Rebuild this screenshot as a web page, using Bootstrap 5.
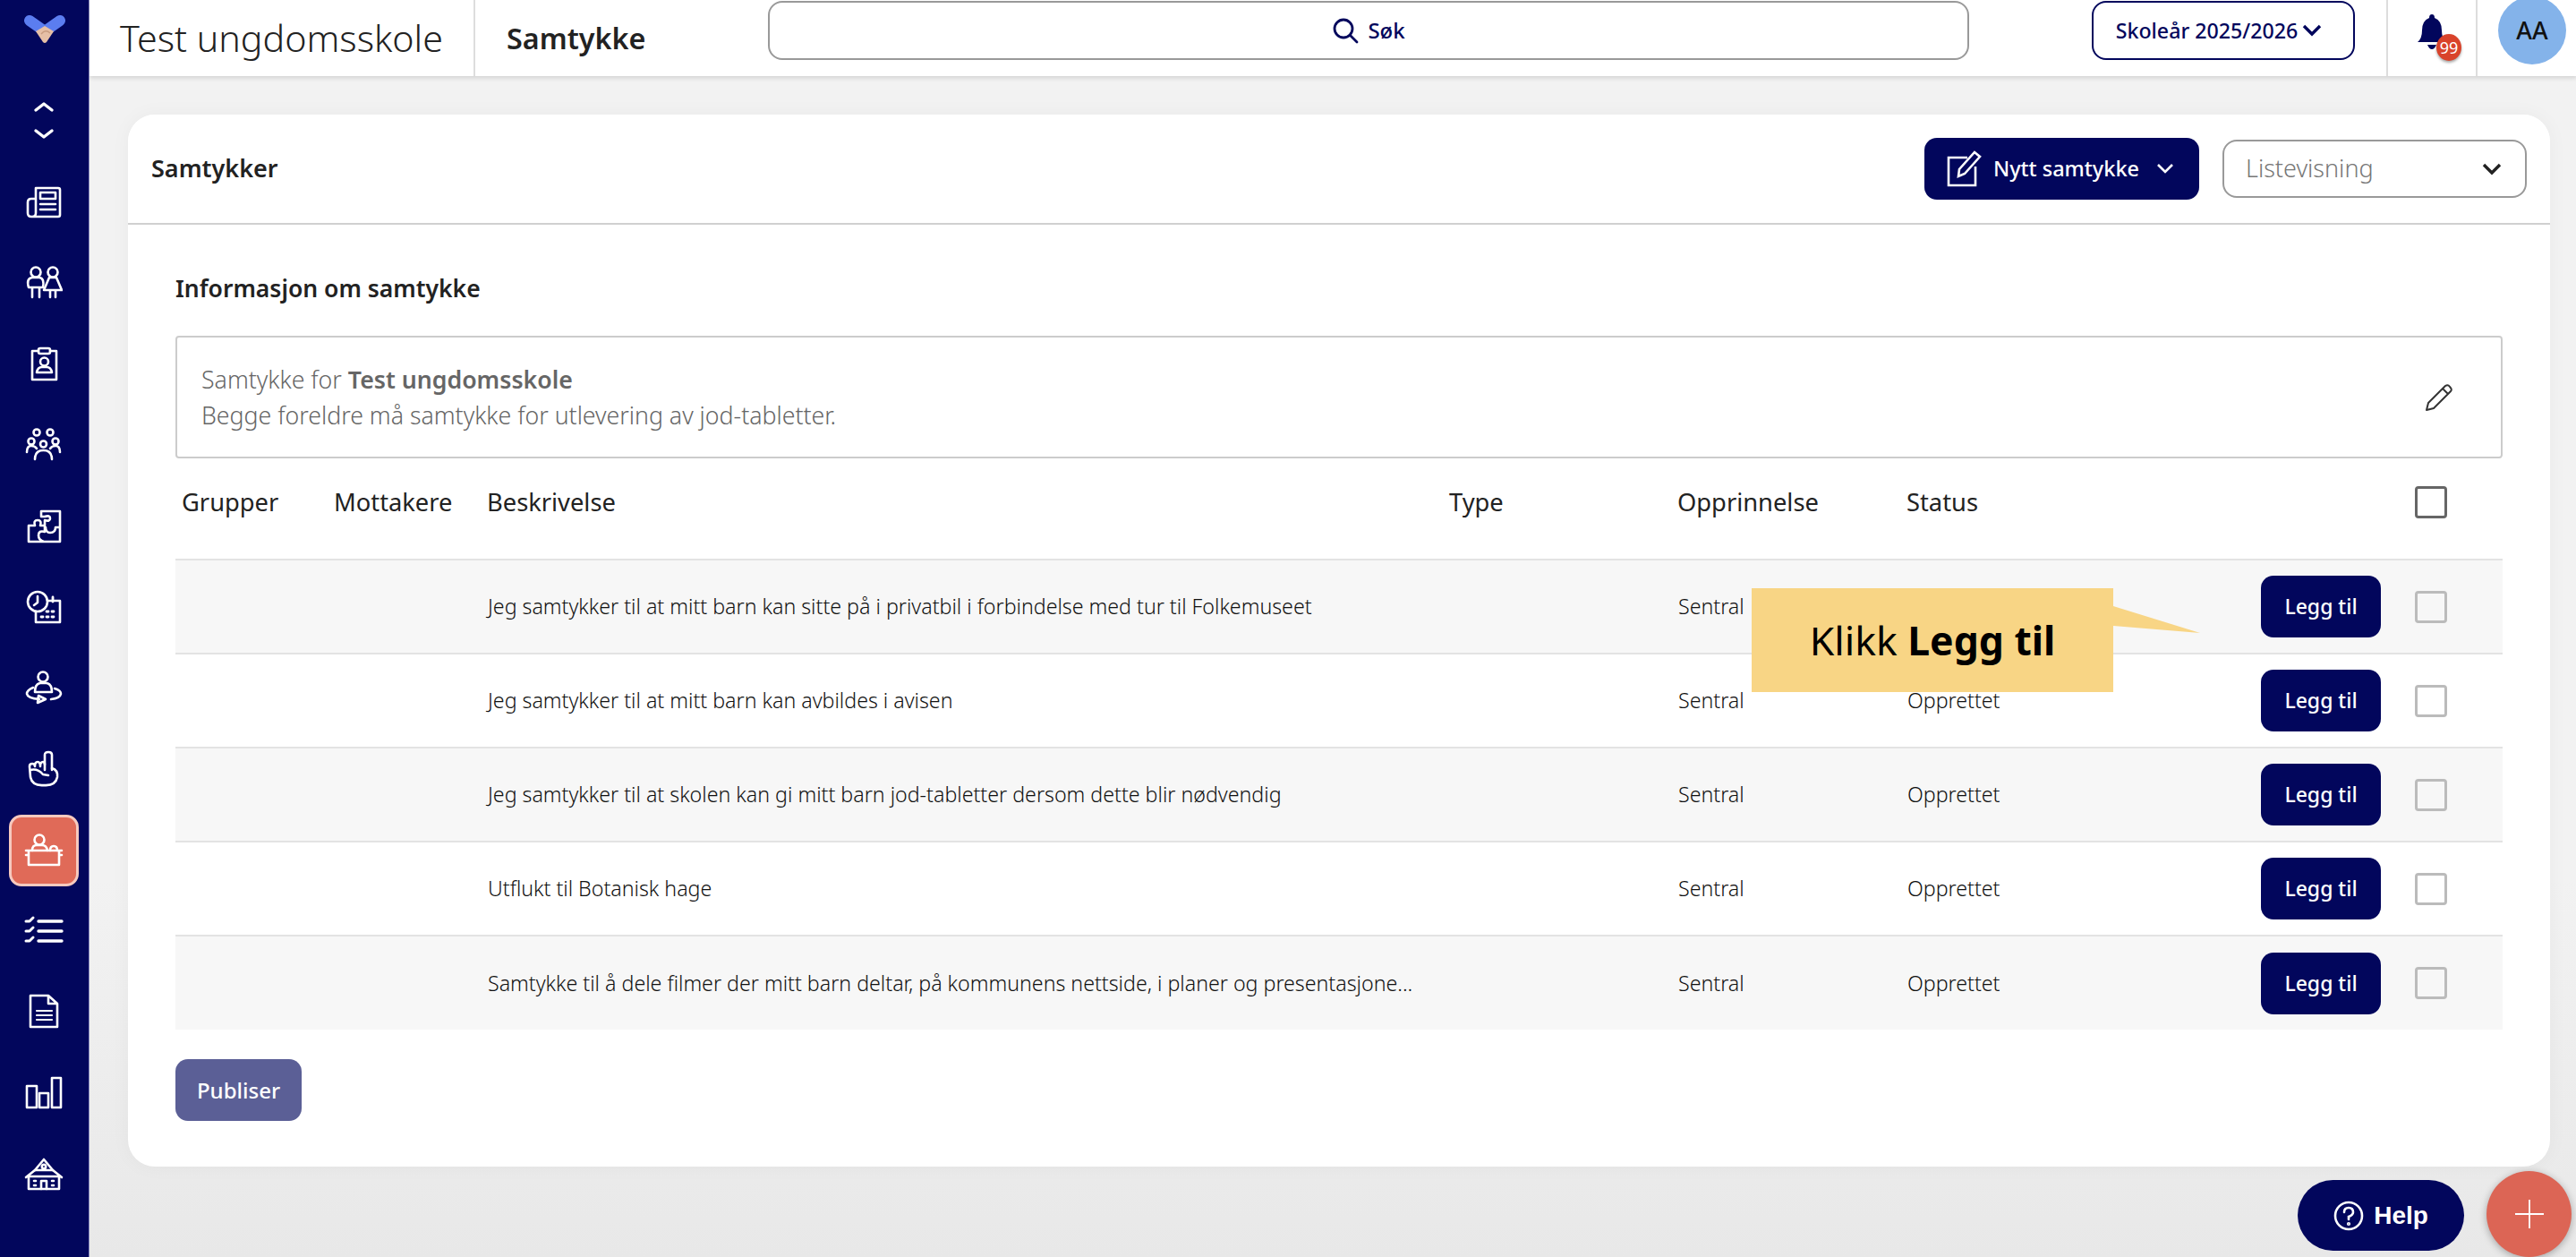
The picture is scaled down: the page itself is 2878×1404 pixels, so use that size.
<!DOCTYPE html>
<html lang="nb">
<head>
  <meta charset="UTF-8">
  <title>Samtykke</title>
  <link href="https://cdn.jsdelivr.net/npm/bootstrap@5.3.0/dist/css/bootstrap.min.css" rel="stylesheet">
  <style>
    html, body { height: 100%; }
    body {
      font-family: "Noto Sans", "Open Sans", sans-serif;
      background: linear-gradient(#f2f2f2 70%, #e8e8e8);
      color: #222;
      overflow: hidden;
    }
    .app-shell { height: 1404px; }
    .side-rail {
      width: 100px; flex: none; background: #02065c;
      border-right: 1px solid #8a8cc0;
      padding-top: 15px;
    }
    .rail-logo { height: 75px; }
    .rail-item { width: 78px; height: 90.5px; margin-left: 10px; }
    .side-rail svg.line-icon { fill: none; stroke: #fff; stroke-width: 2.6; stroke-linecap: round; stroke-linejoin: round; }
    .rail-active {
      width: 78px; height: 80px; margin: 5px 0 5px 10px; background: #e06a58;
      border: 3px solid #f6c9bf; border-radius: 14px;
    }
    .top-bar { height: 85px; background: #fff; box-shadow: 0 2px 5px rgba(0,0,0,.14); }
    .school-cell { width: 431px; padding-left: 34px; border-right: 2px solid #ddd; font-size: 41.2px; font-weight: 300; }
    .page-cell { width: 327px; padding-left: 35px; font-size: 32.3px; font-weight: 600; }
    .search-box {
      width: 1342px; height: 66px; margin-top: 1px; background: #fff;
      border: 2px solid #999; border-radius: 16px; color: #02065c;
      font-size: 24px; font-weight: 500; gap: 10px;
    }
    .year-btn {
      width: 294px; height: 66px; margin: 1px 0 0 137px;
      border: 2px solid #02065c; border-radius: 16px; background: #fff;
      color: #02065c; font-size: 23.2px; font-weight: 500; gap: 5px; padding: 0 10px 0 0;
    }
    .bell-cell { width: 102px; margin-left: 35px; border-left: 2px solid #ddd; border-right: 2px solid #ddd; }
    .bell-count {
      top: 38px; left: 54px; width: 28px; height: 30px; background: #d9432b; color: #fff;
      border-radius: 50%; font-size: 18px; line-height: 30px; text-align: center;
      box-shadow: 0 2px 3px rgba(0,0,0,.35);
    }
    .avatar-dot {
      width: 76px; height: 76px; margin: -4px 0 0 23px; border-radius: 50%;
      background: #84b3ea; color: #111; font-size: 27px; font-weight: 500;
    }
    .main-card {
      margin: 43px 30px 0 43px; height: 1175px; border: 0; border-radius: 30px;
      box-shadow: 0 0 22px rgba(0,0,0,.04);
    }
    .main-head {
      height: 123px; padding: 0 26px; background: #fff;
      border-bottom: 2px solid #d0d0d0;
    }
    .main-head:first-child { border-radius: 30px 30px 0 0; }
    .head-title { font-size: 27px; font-weight: 600; }
    .new-btn {
      width: 307px; height: 69px; background: #02065c; color: #fff; border-radius: 14px;
      font-size: 23.500px; font-weight: 500; gap: 11px; padding: 0 4px 0 0; border: 0;
    }
    .new-btn:hover { background: #02065c; color: #fff; }
    .view-select {
      width: 340px; height: 65px; margin-left: 26px; padding: 0 26px 0 24px;
      border: 2px solid #999; border-radius: 16px; color: #777; font-size: 27px; font-weight: 300;
    }
    .main-body { padding: 53px 53px 0; position: relative; }
    .info-title { font-size: 26.500px; font-weight: 600; line-height: 36px; margin-bottom: 35px; }
    .info-box {
      height: 137px; border: 2px solid #ccc; border-radius: 4px; padding: 0 52px 0 27px;
      color: #666; font-size: 26.700px; font-weight: 300; line-height: 40px;
    }
    .info-box b { font-weight: 600; }
    .consent-table { table-layout: fixed; width: 2600px; margin: 0; --bs-table-bg: transparent; }
    .consent-table th {
      height: 113px; padding: 0 0 14px 7px; border-bottom: 2px solid #e3e3e3;
      font-size: 27.300px; font-weight: 400; vertical-align: middle; color: #222;
    }
    .consent-table td {
      height: 105px; padding: 0 0 0 8px; border-bottom: 2px solid #e3e3e3;
      font-size: 23.200px; font-weight: 300; vertical-align: middle; color: #111; white-space: nowrap;
    }
    .consent-table tr:last-child td { border-bottom: 0; }
    .consent-table tbody tr:nth-child(odd) td { background: #f7f7f7; }
    .consent-table td.add-cell { padding-right: 20px; }
    .add-btn {
      width: 134px; height: 69px; background: #02065c; color: #fff; border: 0;
      border-radius: 14px; font-size: 23px; font-weight: 500; padding: 0;
    }
    .add-btn:hover { background: #02065c; color: #fff; }
    .tick-box { width: 36px; height: 36px; border: 3px solid #bbb; border-radius: 4px; background: #fff0; display: block; margin-left: 18px; }
    .tick-head { border-color: #666; }
    .publish-btn {
      width: 141px; height: 69px; margin-top: 33px; background: #5b5f96; color: #fff;
      border: 0; border-radius: 14px; font-size: 24px; font-weight: 500; padding: 0;
    }
    .hint-box {
      left: 1814px; top: 406px; width: 404px; height: 116px; background: #f8d585;
      color: #000; font-size: 44.500px; font-weight: 400;
    }
    .hint-box b { font-weight: 700; }
    .hint-tail { left: 404px; top: 20px; }
    .help-fab {
      position: fixed; left: 2567px; top: 1318px; width: 186px; height: 79px;
      background: #02065c; color: #fff; border-radius: 40px; border: 0; padding: 0; gap: 11px;
      font-family: "Liberation Sans", sans-serif; font-size: 28px; font-weight: 700;
    }
    .plus-fab {
      position: fixed; left: 2778px; top: 1308px; width: 95px; height: 96px; border-radius: 50%;
      background: #dc6555; box-shadow: 0 2px 8px rgba(0,0,0,.3);
    }
  </style>
</head>
<body>
  <div class="app-shell d-flex">
    <nav class="side-rail d-flex flex-column">
      <div class="rail-logo d-flex justify-content-center">
        <svg width="48" height="36" viewBox="0 0 48 36">
          <path d="M7 8 L24 20 L41 8" fill="none" stroke="#5b7df0" stroke-width="12" stroke-linecap="round" stroke-linejoin="round"/>
          <path d="M14 20 L24 14 L34 20 L26 32 Q24 34 22 32Z" fill="#e6bfa6"/>
          <path d="M20 23 Q25 17 30 22" fill="none" stroke="#c99c80" stroke-width="1.5"/>
        </svg>
      </div>
      <div class="rail-item d-flex align-items-center justify-content-center">
        <svg class="line-icon" width="40" height="50" viewBox="0 0 40 50"><path d="M11 13 L20 6 L29 13M11 36 L20 43 L29 36" stroke-width="3.4"/></svg>
      </div>
      <div class="rail-item d-flex align-items-center justify-content-center">
        <svg class="line-icon" width="42" height="40" viewBox="0 0 42 40"><path d="M12 4 H37 Q39 4 39 6 V34 Q39 36 37 36 H7 Q3 36 3 32 V20 Q3 16 7 16 H12 M12 4 V32 Q12 36 8 36"/><rect x="17" y="9" width="17" height="7"/><path d="M17 22 H34 M17 28 H34"/></svg>
      </div>
      <div class="rail-item d-flex align-items-center justify-content-center">
        <svg class="line-icon" width="42" height="40" viewBox="0 0 42 40"><circle cx="12" cy="8" r="5.5"/><path d="M4 25 Q1 15 8 14 H16 Q22 15 20 25 H4Z M8 25 V36 M16 25 V36"/><circle cx="31" cy="8" r="5.5"/><path d="M27 14 H35 L41 28 H21Z M28 28 V36 M34 28 V36"/></svg>
      </div>
      <div class="rail-item d-flex align-items-center justify-content-center">
        <svg class="line-icon" width="42" height="40" viewBox="0 0 42 40"><path d="M15 5 H8 V37 H35 V5 H28"/><rect x="15" y="2" width="13" height="6" rx="2"/><circle cx="21.5" cy="17" r="4.5"/><path d="M13 29 Q14 23 19 23 H24 Q29 23 30 29Z"/></svg>
      </div>
      <div class="rail-item d-flex align-items-center justify-content-center">
        <svg class="line-icon" width="42" height="40" viewBox="0 0 42 40"><circle cx="13" cy="6" r="3.5"/><circle cx="28" cy="6" r="3.5"/><circle cx="7" cy="16" r="3.5"/><circle cx="20.500" cy="19" r="3.5"/><circle cx="34" cy="16" r="3.5"/><path d="M2 28 Q2 21 7 21 Q11 21 13 24M39 28 Q39 21 34 21 Q30 21 28 24M11 36 Q11 26 20.500 26 Q30 26 30 36"/></svg>
      </div>
      <div class="rail-item d-flex align-items-center justify-content-center">
        <svg class="line-icon" width="42" height="40" viewBox="0 0 42 40"><path d="M18 3 H39 V37 H4 V19 H11 Q9 13 14 13 Q19 13 17 19 H22 V13 Q28 15 28 11 Q28 7 22 9 L18 9Z M39 21 H34 Q34 27 28 27 Q23 27 23 21 M22 19 V26 Q15 24 15 30 Q15 35 21 37"/></svg>
      </div>
      <div class="rail-item d-flex align-items-center justify-content-center">
        <svg class="line-icon" width="42" height="40" viewBox="0 0 42 40"><circle cx="14" cy="14" r="11"/><path d="M14 8 V15 L10 18"/><path d="M25 13 H39 V37 H12 V25"/><path d="M31 9 V14 M18 31 H20 M24 31 H26 M30 31 H32 M24 25 H26 M30 25 H32" stroke-width="2.8"/></svg>
      </div>
      <div class="rail-item d-flex align-items-center justify-content-center">
        <svg class="line-icon" width="42" height="40" viewBox="0 0 42 40"><circle cx="20" cy="7" r="5.500"/><path d="M11 24 Q11 15 17 14 H24 Q30 15 30 24Z"/><path d="M9 19 Q2 22 2 26 Q3 31 16 32 M15 28 L23 32 L14 36Z M29 32 Q39 31 40 26 Q40 22 33 20" /></svg>
      </div>
      <div class="rail-item d-flex align-items-center justify-content-center">
        <svg class="line-icon" width="42" height="42" viewBox="0 0 42 42"><path d="M22 22 V5 Q22 2 26 2 Q30 2 30 5 V22"/><path d="M30 20 Q37 22 36 30 Q34 40 21 39 Q8 40 6 30 L5 18 Q5 15 8 15 Q11 15 11 18 M11 18 Q11 13 14 13 Q17 13 17 18 M17 18 Q17 13 20 13 Q22 13 22 16"/><path d="M6 22 Q14 20 20 27 L26 28"/></svg>
      </div>
      <div class="rail-active d-flex align-items-center justify-content-center">
        <svg class="line-icon" width="44" height="40" viewBox="0 0 44 40"><circle cx="17" cy="8" r="5.500"/><path d="M9 20 Q9 14 14 14 H20 Q25 14 26 20"/><path d="M29 20 Q29 15 33 15 Q37 15 37 20"/><path d="M2 20 H42 M5 20 V36 H39 V20 M2 25 H5 M39 25 H42"/></svg>
      </div>
      <div class="rail-item d-flex align-items-center justify-content-center">
        <svg class="line-icon" width="44" height="36" viewBox="0 0 44 36"><path d="M16 7 H42 M16 18 H42 M16 29 H42" stroke-width="3.400"/><path d="M2 7 H6 L10 3 M2 18 H6 L10 14 M2 29 H6 L10 25" stroke-width="3"/></svg>
      </div>
      <div class="rail-item d-flex align-items-center justify-content-center">
        <svg class="line-icon" width="36" height="40" viewBox="0 0 36 40"><path d="M3 2 H23 L33 11 V37 H3Z M23 2 V11 H33"/><path d="M10 19 H27 M10 24 H27 M10 29 H27" stroke-width="2.200"/></svg>
      </div>
      <div class="rail-item d-flex align-items-center justify-content-center">
        <svg class="line-icon" width="42" height="38" viewBox="0 0 42 38"><rect x="2" y="11" width="11" height="24"/><rect x="16" y="19" width="10" height="16"/><rect x="30" y="2" width="10" height="33"/></svg>
      </div>
      <div class="rail-item d-flex align-items-center justify-content-center">
        <svg class="line-icon" width="44" height="38" viewBox="0 0 44 38"><path d="M5 36 H39 V22 H5Z M2 23 L12 15 H32 L42 23"/><path d="M12 15 L22 3 L32 15"/><circle cx="22" cy="11" r="2.200"/><path d="M11 27 H13 M31 27 H33 M11 32 H13 M31 32 H33 M19 36 V27 H25 V36"/></svg>
      </div>
    </nav>

    <div class="flex-grow-1">
      <header class="top-bar d-flex">
        <div class="school-cell d-flex align-items-center">Test ungdomsskole</div>
        <div class="page-cell d-flex align-items-center">Samtykke</div>
        <div class="search-box d-flex align-items-center justify-content-center">
          <svg width="30" height="30" viewBox="0 0 30 30" fill="none" stroke="#02065c" stroke-width="2.800" stroke-linecap="round"><circle cx="13" cy="13" r="10"/><path d="M20.500 20.500 L28 28"/></svg>
          Søk
        </div>
        <button class="btn year-btn d-flex align-items-center justify-content-center">Skoleår 2025/2026
          <svg width="22" height="14" viewBox="0 0 22 14" fill="none" stroke="#02065c" stroke-width="3.400"><path d="M2 2 L11 11 L20 2"/></svg>
        </button>
        <div class="bell-cell position-relative d-flex justify-content-center">
          <svg class="mt-3" width="34" height="40" viewBox="0 0 34 40" fill="#02065c"><path d="M17 0 Q20 0 20 4 Q28 7 28 18 Q28 27 33 31 H1 Q6 27 6 18 Q6 7 14 4 Q14 0 17 0Z"/><path d="M12 34 H22 Q20 39 17 39 Q14 39 12 34Z"/></svg>
          <span class="bell-count position-absolute">99</span>
        </div>
        <div class="avatar-dot d-flex align-items-center justify-content-center">AA</div>
      </header>

      <div class="card main-card">
        <div class="card-header main-head d-flex align-items-center">
          <div class="head-title me-auto">Samtykker</div>
          <button class="btn new-btn d-flex align-items-center justify-content-center">
            <svg width="42" height="44" viewBox="0 0 42 44" fill="none" stroke="#fff" stroke-width="2.600"><path d="M24 9 H3 V40 H33 V19"/><path d="M14 30 L15 22 L32 3 L38 8 L21 27Z"/></svg>
            Nytt samtykke
            <svg class="ms-2" width="20" height="13" viewBox="0 0 20 13" fill="none" stroke="#fff" stroke-width="2.600"><path d="M2 2 L10 10 L18 2"/></svg>
          </button>
          <div class="view-select d-flex align-items-center justify-content-between">Listevisning
            <svg width="22" height="14" viewBox="0 0 22 14" fill="none" stroke="#222" stroke-width="3.400"><path d="M2 2 L11 11 L20 2"/></svg>
          </div>
        </div>
        <div class="card-body main-body">
          <div class="info-title">Informasjon om samtykke</div>
          <div class="info-box d-flex align-items-center justify-content-between">
            <div>Samtykke for <b>Test ungdomsskole</b><br>Begge foreldre må samtykke for utlevering av jod-tabletter.</div>
            <svg width="34" height="34" viewBox="0 0 34 34" fill="none" stroke="#333" stroke-width="2" stroke-linejoin="round"><path d="M3 31 L5 23 L24 4 Q27 2 29 5 Q32 8 30 10 L11 29Z M21 7 L27 13"/></svg>
          </div>
          <table class="table consent-table">
            <colgroup><col style="width:170px"><col style="width:171px"><col style="width:1075px"><col style="width:255px"><col style="width:256px"><col style="width:240px"><col style="width:317px"><col style="width:116px"></colgroup>
            <thead>
              <tr><th>Grupper</th><th>Mottakere</th><th>Beskrivelse</th><th>Type</th><th>Opprinnelse</th><th>Status</th><th></th><th class="ps-0"><span class="tick-box tick-head"></span></th></tr>
            </thead>
            <tbody>
              <tr><td></td><td></td><td>Jeg samtykker til at mitt barn kan sitte på i privatbil i forbindelse med tur til Folkemuseet</td><td></td><td>Sentral</td><td></td><td class="add-cell text-end"><button class="btn add-btn">Legg til</button></td><td class="ps-0"><span class="tick-box"></span></td></tr>
              <tr><td></td><td></td><td>Jeg samtykker til at mitt barn kan avbildes i avisen</td><td></td><td>Sentral</td><td>Opprettet</td><td class="add-cell text-end"><button class="btn add-btn">Legg til</button></td><td class="ps-0"><span class="tick-box"></span></td></tr>
              <tr><td></td><td></td><td>Jeg samtykker til at skolen kan gi mitt barn jod-tabletter dersom dette blir nødvendig</td><td></td><td>Sentral</td><td>Opprettet</td><td class="add-cell text-end"><button class="btn add-btn">Legg til</button></td><td class="ps-0"><span class="tick-box"></span></td></tr>
              <tr><td></td><td></td><td>Utflukt til Botanisk hage</td><td></td><td>Sentral</td><td>Opprettet</td><td class="add-cell text-end"><button class="btn add-btn">Legg til</button></td><td class="ps-0"><span class="tick-box"></span></td></tr>
              <tr><td></td><td></td><td>Samtykke til å dele filmer der mitt barn deltar, på kommunens nettside, i planer og presentasjone...</td><td></td><td>Sentral</td><td>Opprettet</td><td class="add-cell text-end"><button class="btn add-btn">Legg til</button></td><td class="ps-0"><span class="tick-box"></span></td></tr>
            </tbody>
          </table>
          <button class="btn publish-btn">Publiser</button>
          <div class="hint-box position-absolute d-flex align-items-center justify-content-center">
            <span>Klikk&nbsp;<b>Legg til</b></span>
            <svg class="hint-tail position-absolute" width="98" height="30" viewBox="0 0 98 30"><path d="M0 0 L97 41 L0 30Z" fill="#f8d585" transform="scale(1 .73)"/></svg>
          </div>
        </div>
      </div>
    </div>
  </div>

  <button class="btn help-fab d-flex align-items-center justify-content-center">
    <svg width="34" height="36" viewBox="0 0 34 36" fill="none" stroke="#fff" stroke-width="2.600"><circle cx="17" cy="18" r="15"/><path d="M12 14 Q12 9 17 9 Q22 9 22 14 Q22 17 17 19 V22" stroke-linecap="round"/><circle cx="17" cy="27" r=".8"/></svg>
    Help
  </button>
  <div class="plus-fab d-flex align-items-center justify-content-center">
    <svg width="32" height="32" viewBox="0 0 32 32" stroke="#fff" stroke-width="1.800"><path d="M0 16 H32 M16 0 V32"/></svg>
  </div>

  <script src="https://cdn.jsdelivr.net/npm/bootstrap@5.3.0/dist/js/bootstrap.bundle.min.js"></script>
</body>
</html>
